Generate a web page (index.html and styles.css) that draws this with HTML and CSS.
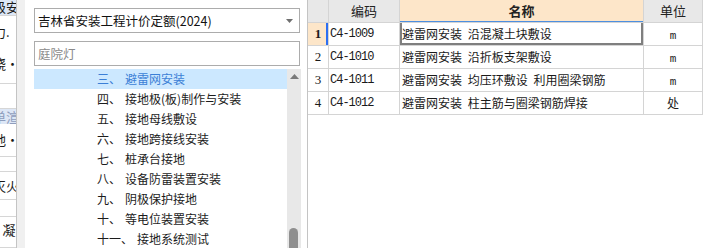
FILE: index.html
```html
<!DOCTYPE html>
<html lang="zh-CN">
<head>
    <meta charset="UTF-8">
    <title>定额库</title>
    <link rel="stylesheet" href="styles.css">
</head>
<body>
    <div class="app">
        <!-- clipped neighbour grid -->
        <div class="strip">
            <div class="srow s-a hl"><span>级安</span></div>
            <div class="srow s-b"><span>力.<br>跷·</span></div>
            <div class="srow s-c"></div>
            <div class="srow s-d hl dim"><span>单渲</span></div>
            <div class="srow s-e"><span>接地·</span></div>
            <div class="srow s-f"></div>
            <div class="srow s-g"><span>灭火</span></div>
            <div class="srow s-h"></div>
            <div class="srow s-i"><span>凝.</span></div>
        </div>
        <div class="gutter"></div>

        <!-- library tree -->
        <div class="panel">
            <div class="combo">
                <span>吉林省安装工程计价定额(2024)</span>
                <svg class="combo-arrow" width="7" height="4" viewBox="0 0 7 4"><path d="M0 0h7L3.5 4z" fill="#6f6f6f"/></svg>
            </div>
            <div class="search">庭院灯</div>
            <div class="tree">
                <ul class="tree-list">
                    <li class="sel"><span class="num">三、</span>避雷网安装</li>
                    <li><span class="num">四、</span>接地极(板)制作与安装</li>
                    <li><span class="num">五、</span>接地母线敷设</li>
                    <li><span class="num">六、</span>接地跨接线安装</li>
                    <li><span class="num">七、</span>桩承台接地</li>
                    <li><span class="num">八、</span>设备防雷装置安装</li>
                    <li><span class="num">九、</span>阴极保护接地</li>
                    <li><span class="num">十、</span>等电位装置安装</li>
                    <li><span class="num">十一、</span>接地系统测试</li>
                </ul>
                <div class="vscroll">
                    <svg class="up" width="9" height="5" viewBox="0 0 9 5"><path d="M4.5 0L9 5H0z" fill="#7a7a7a"/></svg>
                    <div class="thumb"></div>
                </div>
            </div>
        </div>

        <!-- quota grid -->
        <div class="grid">
            <div class="cell hd"></div>
            <div class="cell hd">编码</div>
            <div class="cell hd name-hd">名称</div>
            <div class="cell hd">单位</div>

            <div class="cell rn rn-active">1</div>
            <div class="cell code">C4-1009</div>
            <div class="cell name cur">避雷网安装 沿混凝土块敷设</div>
            <div class="cell unit"><span class="m">m</span></div>

            <div class="cell rn">2</div>
            <div class="cell code">C4-1010</div>
            <div class="cell name">避雷网安装 沿折板支架敷设</div>
            <div class="cell unit"><span class="m">m</span></div>

            <div class="cell rn">3</div>
            <div class="cell code">C4-1011</div>
            <div class="cell name">避雷网安装 均压环敷设 利用圈梁钢筋</div>
            <div class="cell unit"><span class="m">m</span></div>

            <div class="cell rn">4</div>
            <div class="cell code">C4-1012</div>
            <div class="cell name">避雷网安装 柱主筋与圈梁钢筋焊接</div>
            <div class="cell unit">处</div>
        </div>
    </div>
</body>
</html>
```

FILE: styles.css
```css
/* General */
body {
    margin: 0;
    background: #fff;
    font-family: "Noto Sans CJK SC", sans-serif;
    color: #1a1a1a;
}
.app {
    display: flex;
    width: 707px;
    height: 248px;
    overflow: hidden;
}

/* Left clipped strip */
.strip {
    width: 16px;
    flex: none;
    border-right: 1px solid #c4c4c4;
    overflow: hidden;
    font-size: 13px;
}
.srow {
    display: flex;
    justify-content: flex-end;
    overflow: hidden;
    white-space: nowrap;
    box-sizing: border-box;
    border-bottom: 1px solid #d6d6d6;
}
.srow span {
    margin-right: -3px;
}
.srow.hl {
    background: #dde7f6;
}
.srow.dim {
    color: #8e9dbd;
}
.s-a { height: 16px; line-height: 13px; }
.s-b { height: 68px; line-height: 32px; padding-top: 0; }
.s-c { height: 25px; }
.s-d { height: 15px; line-height: 15px; border-bottom: none; }
.s-e { height: 33px; line-height: 32px; }
.s-f { height: 15px; }
.s-g { height: 28px; line-height: 28px; }
.s-h { height: 17px; }
.s-i { height: 31px; line-height: 26px; }

.gutter {
    width: 8px;
    flex: none;
    background: #f0f0f0;
}

/* Tree panel */
.panel {
    width: 267px;
    flex: none;
    padding: 8px 6px 0 9px;
    display: flex;
    flex-direction: column;
}
.combo, .search {
    box-sizing: border-box;
    height: 25px;
    margin-right: 1px;
    border: 1px solid #acacac;
    padding: 0 3px;
    font-size: 12.5px;
    line-height: 23px;
}
.combo {
    display: flex;
    justify-content: space-between;
    align-items: center;
    margin-bottom: 8px;
    color: #111;
}
.combo-arrow {
    margin-right: 3px;
}
.search {
    color: #8a8a8a;
    margin-bottom: 3px;
}
.tree {
    flex: 1;
    display: flex;
    min-height: 0;
}
.tree-list {
    flex: 1;
    list-style: none;
    margin: 0;
    padding: 0;
    font-size: 12px;
}
.tree-list li {
    height: 20px;
    line-height: 20px;
    padding-left: 63px;
    white-space: nowrap;
    color: #1c1c1c;
}
.tree-list li.sel {
    background: #cce8ff;
    color: #3b7fd6;
}
.tree-list .num {
    margin-right: 4px;
}
.vscroll {
    width: 14px;
    background: #e8e8e8;
    position: relative;
}
.vscroll .up {
    display: block;
    margin: 5px auto 0;
}
.vscroll .thumb {
    position: absolute;
    left: 2px;
    right: 3px;
    top: 159px;
    height: 40px;
    border-radius: 5px;
    background: #8f8f8f;
}

/* Quota grid */
.grid {
    flex: none;
    display: grid;
    grid-template-columns: 21px 71px 244px 59px;
    grid-auto-rows: 23px;
    align-content: start;
    border-left: 1px solid #c4c4c4;
    height: 248px;
    box-sizing: border-box;
    font-size: 12px;
}
.cell {
    box-sizing: border-box;
    border-right: 1px solid #d4d4d4;
    border-bottom: 1px solid #d4d4d4;
    line-height: 22px;
    white-space: nowrap;
    overflow: hidden;
}
.hd {
    background: #e8e8e8;
    text-align: center;
    font-size: 13px;
    color: #222;
}
.name-hd {
    background: #fde6c9;
    font-weight: bold;
    box-shadow: inset 0 -1px #4d8fe0;
}
.rn {
    text-align: center;
    font-family: "Liberation Serif", serif;
    font-size: 13px;
}
.rn-active {
    background: #fde6c9;
    font-weight: bold;
    box-shadow: inset -2px 0 #2d6ff2;
}
.code {
    padding-left: 1px;
    font-family: "Liberation Mono", monospace;
    letter-spacing: -1px;
}
.name {
    padding-left: 2px;
    word-spacing: 3px;
}
.name.cur {
    box-shadow: inset 2px 0 #7f7f7f, inset -2px 0 #7f7f7f, inset 0 -2px #7f7f7f;
}
.unit {
    text-align: center;
}
.unit .m {
    font-family: "Liberation Mono", monospace;
    font-size: 11px;
}
```
